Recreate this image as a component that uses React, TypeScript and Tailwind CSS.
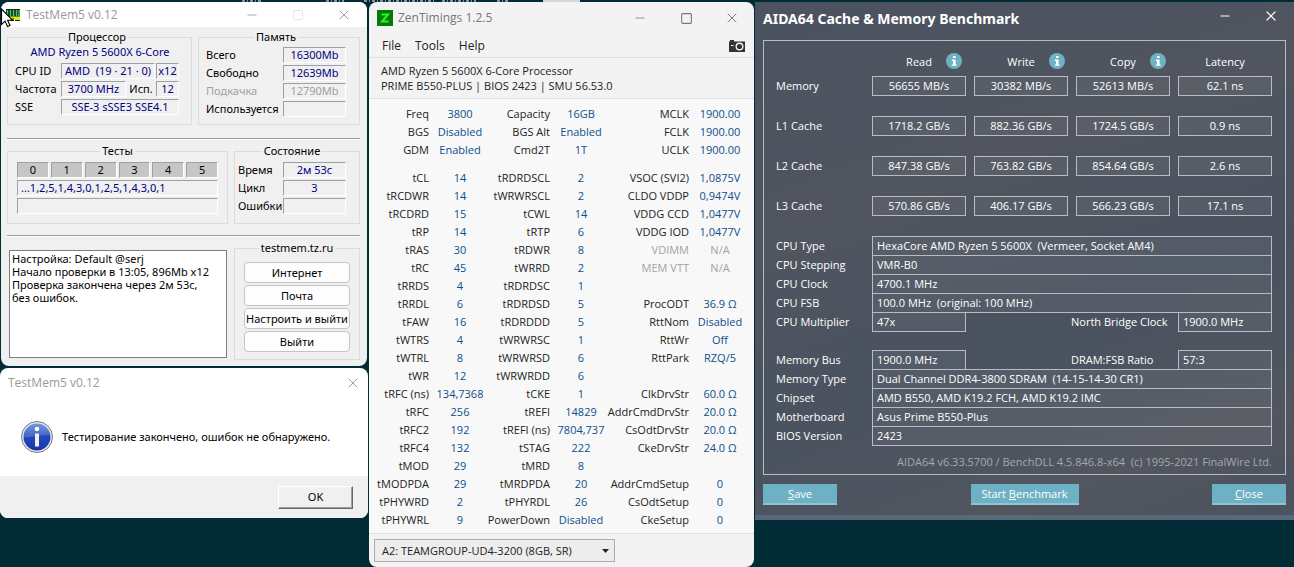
import React from 'react';
import { Minus, Square, X } from 'lucide-react';

const TAHOMA = "font-['Noto_Sans','Liberation_Sans',sans-serif]";
const SEGOE = "font-['Open_Sans','Noto_Sans',sans-serif]";

const TEST_IDS = [0, 1, 2, 3, 4, 5];

const LINKS = ['Интернет', 'Почта', 'Настроить и выйти', 'Выйти'];

type TimingRow = [string, string, string, string, string, string];

const CLOCKS: TimingRow[] = [
  ['Freq', '3800', 'Capacity', '16GB', 'MCLK', '1900.00'],
  ['BGS', 'Disabled', 'BGS Alt', 'Enabled', 'FCLK', '1900.00'],
  ['GDM', 'Enabled', 'Cmd2T', '1T', 'UCLK', '1900.00'],
];

const TIMINGS: TimingRow[] = [
  ['tCL', '14', 'tRDRDSCL', '2', 'VSOC (SVI2)', '1,0875V'],
  ['tRCDWR', '14', 'tWRWRSCL', '2', 'CLDO VDDP', '0,9474V'],
  ['tRCDRD', '15', 'tCWL', '14', 'VDDG CCD', '1,0477V'],
  ['tRP', '14', 'tRTP', '6', 'VDDG IOD', '1,0477V'],
  ['tRAS', '30', 'tRDWR', '8', 'VDIMM', 'N/A'],
  ['tRC', '45', 'tWRRD', '2', 'MEM VTT', 'N/A'],
  ['tRRDS', '4', 'tRDRDSC', '1', '', ''],
  ['tRRDL', '6', 'tRDRDSD', '5', 'ProcODT', '36.9 Ω'],
  ['tFAW', '16', 'tRDRDDD', '5', 'RttNom', 'Disabled'],
  ['tWTRS', '4', 'tWRWRSC', '1', 'RttWr', 'Off'],
  ['tWTRL', '8', 'tWRWRSD', '6', 'RttPark', 'RZQ/5'],
  ['tWR', '12', 'tWRWRDD', '6', '', ''],
  ['tRFC (ns)', '134,7368', 'tCKE', '1', 'ClkDrvStr', '60.0 Ω'],
  ['tRFC', '256', 'tREFI', '14829', 'AddrCmdDrvStr', '20.0 Ω'],
  ['tRFC2', '192', 'tREFI (ns)', '7804,737', 'CsOdtDrvStr', '20.0 Ω'],
  ['tRFC4', '132', 'tSTAG', '222', 'CkeDrvStr', '24.0 Ω'],
  ['tMOD', '29', 'tMRD', '8', '', ''],
  ['tMODPDA', '29', 'tMRDPDA', '20', 'AddrCmdSetup', '0'],
  ['tPHYWRD', '2', 'tPHYRDL', '26', 'CsOdtSetup', '0'],
  ['tPHYWRL', '9', 'PowerDown', 'Disabled', 'CkeSetup', '0'],
];

const BENCH = [
  { name: 'Memory', values: ['56655 MB/s', '30382 MB/s', '52613 MB/s', '62.1 ns'] },
  { name: 'L1 Cache', values: ['1718.2 GB/s', '882.36 GB/s', '1724.5 GB/s', '0.9 ns'] },
  { name: 'L2 Cache', values: ['847.38 GB/s', '763.82 GB/s', '854.64 GB/s', '2.6 ns'] },
  { name: 'L3 Cache', values: ['570.86 GB/s', '406.17 GB/s', '566.23 GB/s', '17.1 ns'] },
];

type Spec = { label: string; value: string; side?: { label: string; value: string } };

const CPU_SPECS: Spec[] = [
  { label: 'CPU Type', value: 'HexaCore AMD Ryzen 5 5600X  (Vermeer, Socket AM4)' },
  { label: 'CPU Stepping', value: 'VMR-B0' },
  { label: 'CPU Clock', value: '4700.1 MHz' },
  { label: 'CPU FSB', value: '100.0 MHz  (original: 100 MHz)' },
  { label: 'CPU Multiplier', value: '47x', side: { label: 'North Bridge Clock', value: '1900.0 MHz' } },
];

const BOARD_SPECS: Spec[] = [
  { label: 'Memory Bus', value: '1900.0 MHz', side: { label: 'DRAM:FSB Ratio', value: '57:3' } },
  { label: 'Memory Type', value: 'Dual Channel DDR4-3800 SDRAM  (14-15-14-30 CR1)' },
  { label: 'Chipset', value: 'AMD B550, AMD K19.2 FCH, AMD K19.2 IMC' },
  { label: 'Motherboard', value: 'Asus Prime B550-Plus' },
  { label: 'BIOS Version', value: '2423' },
];

/* ---------- TestMem5 ---------- */

function Sunken({ children, className = '' }: { children?: React.ReactNode; className?: string }) {
  return (
    <span
      className={`flex h-4 items-center justify-center whitespace-pre border border-t-[#a0a0a0] border-l-[#a0a0a0] border-r-white border-b-white text-[#000080] ${className}`}
    >
      {children}
    </span>
  );
}

function Group({ title, children, className = '' }: { title: string; children: React.ReactNode; className?: string }) {
  return (
    <fieldset className={`min-w-0 border border-[#dcdcdc] ${className}`}>
      <legend className="mx-auto px-0.5 leading-[14px]">{title}</legend>
      {children}
    </fieldset>
  );
}

function StatRow({ label, value, disabled = false }: { label: string; value?: string; disabled?: boolean }) {
  return (
    <div className="flex items-center justify-between">
      <span className={`whitespace-nowrap ${disabled ? 'text-[#a0a0a0]' : ''}`}>{label}</span>
      <Sunken className="w-[63px] shrink-0">
        <span className={disabled ? 'text-[#a0a0a0]' : ''}>{value}</span>
      </Sunken>
    </div>
  );
}

function RamIcon() {
  return (
    <svg width="18" height="14" viewBox="0 0 18 14" aria-hidden="true">
      <rect x="1" y="1" width="14" height="9" fill="#0b3d1c" />
      <path d="M2.5 2v6M5.5 2v6M8.5 2v6M11.5 2v6M14 2v6" stroke="#4fc47a" strokeWidth="1.3" />
      <rect x="4" y="8.5" width="11" height="3.5" fill="#e3e31a" />
      <path d="M1 1.5h14M8 12v-2M5 12.5h4M10 12.5h5" stroke="#222" />
    </svg>
  );
}

function Cursor() {
  return (
    <svg className="absolute top-2 left-0" width="14" height="20" viewBox="0 0 14 20" aria-hidden="true">
      <path d="M1.5 1v15.5l3.6-3.4 2.4 5.4 2.5-1.1-2.4-5.2h4.9z" fill="#fff" stroke="#000" strokeWidth="1.1" />
    </svg>
  );
}

function TestMemWindow() {
  return (
    <section className={`mx-px overflow-hidden rounded-lg bg-[#f0f0f0] text-[11px] leading-[14px] text-black ${TAHOMA}`}>
      <header className="flex h-[25px] items-center bg-white pl-1 text-[#999]">
        <RamIcon />
        <h1 className={`ml-[3px] flex-1 text-xs ${SEGOE}`}>TestMem5 v0.12</h1>
        <button type="button" aria-label="Свернуть" className="flex w-[46px] justify-center">
          <Minus size={14} strokeWidth={1.4} />
        </button>
        <button type="button" aria-label="Развернуть" disabled className="flex w-[46px] justify-center text-[#e2e2e2]">
          <Square size={12} strokeWidth={1.8} />
        </button>
        <button type="button" aria-label="Закрыть" className="flex w-[46px] justify-center">
          <X size={16} strokeWidth={1.4} />
        </button>
      </header>

      <div className="pt-[3px] pr-[7px] pb-1.5 pl-1.5">
        <div className="grid grid-cols-[185fr_162fr] gap-1.5">
          <Group title="Процессор" className="h-[95px] pr-3 pl-[7px]">
            <div className="flex flex-col gap-0.5 pt-px">
              <p className="h-4 pl-1.5 text-center whitespace-nowrap text-[#000080]">AMD Ryzen 5 5600X 6-Core</p>
              <div className="flex items-center gap-px">
                <span className="w-[45px]">CPU ID</span>
                <Sunken className="flex-1">AMD  (19 · 21 · 0)</Sunken>
                <Sunken className="w-[23px]">x12</Sunken>
              </div>
              <div className="flex items-center gap-px">
                <span className="w-[45px]">Частота</span>
                <Sunken className="w-[65px]">3700 MHz</Sunken>
                <span className="flex-1 text-center">Исп.</span>
                <Sunken className="w-[23px]">12</Sunken>
              </div>
              <div className="flex items-center gap-px">
                <span className="w-[45px]">SSE</span>
                <Sunken className="flex-1">SSE-3 sSSE3 SSE4.1</Sunken>
              </div>
            </div>
          </Group>
          <Group title="Память" className="pr-[13px] pl-[7px]">
            <div className="flex flex-col gap-0.5 pt-[3px]">
              <StatRow label="Всего" value="16300Mb" />
              <StatRow label="Свободно" value="12639Mb" />
              <StatRow label="Подкачка" value="12790Mb" disabled />
              <StatRow label="Используется" />
            </div>
          </Group>
        </div>

        <hr className="mt-[13px] h-0.5 border-t border-b border-t-[#a0a0a0] border-b-white" />

        <div className="mt-1 grid grid-cols-[221fr_126fr] gap-1.5">
          <Group title="Тесты" className="h-20 px-[9px]">
            <div className="flex flex-col gap-0.5 pt-1">
              <ol className="grid h-4 grid-cols-6 gap-0.5">
                {TEST_IDS.map((id) => (
                  <li key={id} className="flex items-center justify-center border border-t-[#a0a0a0] border-l-[#a0a0a0] border-r-white border-b-white bg-[#c6c6c6]">
                    {id}
                  </li>
                ))}
              </ol>
              <Sunken className="justify-start pl-[3px]">...1,2,5,1,4,3,0,1,2,5,1,4,3,0,1</Sunken>
              <Sunken />
            </div>
          </Group>
          <Group title="Состояние" className="pr-[13px] pl-[3px]">
            <div className="flex flex-col gap-0.5 pt-1">
              <StatRow label="Время" value="2м 53с" />
              <StatRow label="Цикл" value="3" />
              <StatRow label="Ошибки" />
            </div>
          </Group>
        </div>

        <hr className="mt-[11px] h-0.5 border-t border-b border-t-[#a0a0a0] border-b-white" />

        <div className="mt-1 grid grid-cols-[221fr_126fr] gap-1.5">
          <textarea
            readOnly
            aria-label="Журнал"
            className="ml-0.5 mt-[9px] mb-0.5 mr-px resize-none overflow-hidden border border-[#7a8085] bg-white px-0.5 pt-px leading-[13px] outline-none"
            defaultValue={'Настройка: Default @serj\nНачало проверки в 13:05, 896Mb x12\nПроверка закончена через 2м 53с,\nбез ошибок.'}
          />
          <Group title="testmem.tz.ru" className="h-[119px] px-[9px]">
            <div className="flex flex-col gap-0.5 pt-[7px]">
              {LINKS.map((link) => (
                <button key={link} type="button" className="h-[21px] rounded-[4px] border border-[#c4c4c4] bg-[#fdfdfd] whitespace-nowrap">
                  {link}
                </button>
              ))}
            </div>
          </Group>
        </div>
      </div>
    </section>
  );
}

function InfoBadge() {
  return (
    <svg width="34" height="34" viewBox="0 0 34 34" aria-hidden="true">
      <defs>
        <linearGradient id="badge" x1="0" y1="0" x2="0" y2="1">
          <stop offset="0" stopColor="#5b86dd" />
          <stop offset="0.5" stopColor="#2349bd" />
          <stop offset="1" stopColor="#1a33a8" />
        </linearGradient>
      </defs>
      <circle cx="17" cy="17" r="15.5" fill="#e8e8ec" stroke="#77797f" />
      <circle cx="17" cy="17" r="13.5" fill="url(#badge)" />
      <path d="M4 17a13 13 0 0 1 26-2c-6-1-18 3-26 2z" fill="#fff" opacity="0.14" />
      <circle cx="17" cy="9" r="2.3" fill="#fff" />
      <rect x="15" y="13.5" width="4" height="13" rx="0.6" fill="#f1f2f8" />
    </svg>
  );
}

function ResultDialog() {
  return (
    <section role="dialog" aria-label="TestMem5 v0.12" className={`mt-0.5 overflow-hidden rounded-lg bg-white text-[11px] text-black ${TAHOMA}`}>
      <header className="flex h-[30px] items-center pl-2 text-[#999]">
        <h2 className={`flex-1 text-xs ${SEGOE}`}>TestMem5 v0.12</h2>
        <button type="button" aria-label="Закрыть" className="mr-[7px] text-[#888]">
          <X size={16} strokeWidth={1.2} />
        </button>
      </header>
      <div className="flex h-[78px] items-center gap-2 pl-5">
        <InfoBadge />
        <p className="whitespace-nowrap">Тестирование закончено, ошибок не обнаружено.</p>
      </div>
      <footer className="flex h-[42px] items-center justify-end bg-[#f0f0f0] pr-[15px]">
        <button type="button" className="h-[23px] w-[75px] border border-t-white border-l-white border-r-[#696969] border-b-[#696969] shadow-[inset_-1px_-1px_0_#a0a0a0]">
          OK
        </button>
      </footer>
    </section>
  );
}

/* ---------- ZenTimings ---------- */

function TimingRows({ rows }: { rows: TimingRow[] }) {
  return (
    <>
      {rows.map((row) => (
        <tr key={row[0]} className="h-[18px]">
          {row.map((cell, i) => {
            const missing = i > 3 && row[5] === 'N/A';
            if (i % 2 === 0) {
              return (
                <th key={i} scope="row" className={`font-normal whitespace-nowrap ${missing ? 'text-[#a3a3a3]' : ''}`}>
                  <span className="flex justify-end">{cell}</span>
                </th>
              );
            }
            return (
              <td key={i} className={`text-center whitespace-nowrap ${missing ? 'text-[#a3a3a3]' : 'text-[#0d4f8b]'}`}>
                {cell}
              </td>
            );
          })}
        </tr>
      ))}
    </>
  );
}

function CameraIcon() {
  return (
    <svg width="16" height="12" viewBox="0 0 16 12" aria-hidden="true">
      <path d="M0 1.5h1V0h4v1.5h11V12H0z" fill="#333" />
      <circle cx="10.5" cy="6.5" r="3.3" fill="none" stroke="#f3f3f3" strokeWidth="1.4" />
      <path d="M2 5.5h2.5" stroke="#f3f3f3" strokeWidth="1.2" />
    </svg>
  );
}

function ZenTimingsWindow() {
  return (
    <section className={`mx-px flex flex-col self-stretch overflow-hidden rounded-lg bg-[#f3f3f3] text-[11px] leading-[15px] text-[#222] ${SEGOE}`}>
      <header className="flex h-8 items-center pl-2 text-[#777]">
        <svg width="16" height="16" viewBox="0 0 16 16" aria-hidden="true">
          <rect width="16" height="16" fill="#067a06" />
          <path d="M4.5 4.5h6.5L5 11.5h6.5" fill="none" stroke="#2cf22c" strokeWidth="2" />
        </svg>
        <h1 className="ml-[5px] flex-1 text-xs">ZenTimings 1.2.5</h1>
        <button type="button" aria-label="Minimize" className="flex w-[46px] justify-center">
          <Minus size={14} strokeWidth={1.4} />
        </button>
        <button type="button" aria-label="Maximize" className="flex w-[46px] justify-center">
          <Square size={13} strokeWidth={2} />
        </button>
        <button type="button" aria-label="Close" className="flex w-[45px] justify-center">
          <X size={16} strokeWidth={1.4} />
        </button>
      </header>

      <nav className="flex h-6 items-center gap-3.5 border-b border-[#dde1e4] pr-[9px] pl-[13px] text-xs">
        <button type="button">File</button>
        <button type="button">Tools</button>
        <button type="button">Help</button>
        <button type="button" aria-label="Screenshot" className="ml-auto">
          <CameraIcon />
        </button>
      </nav>

      <div className="h-[41px] border-b border-[#dde1e4] px-3 pt-[5px]">
        <p className="whitespace-nowrap">AMD Ryzen 5 5600X 6-Core Processor</p>
        <p className="whitespace-nowrap">PRIME B550-PLUS | BIOS 2423 | SMU 56.53.0</p>
      </div>

      <div className="h-[435px] border-b border-[#dde1e4] bg-[#f8f8f8] pt-[5px] pr-[3px]">
        <table className="w-full table-fixed border-collapse">
          <colgroup>
            <col className="w-[60px]" />
            <col className="w-[62px]" />
            <col className="w-[59px]" />
            <col className="w-[62px]" />
            <col />
            <col className="w-[62px]" />
          </colgroup>
          <tbody>
            <TimingRows rows={CLOCKS} />
          </tbody>
          <tbody className="before:block before:h-2.5">
            <TimingRows rows={TIMINGS} />
          </tbody>
        </table>
      </div>

      <div className="flex flex-1 items-center px-[5px]">
        <div className="relative">
          <select aria-label="Memory module" className="block h-[23px] w-[241px] appearance-none border border-[#acacac] bg-[#ededed] pl-[7px] outline-none">
            <option>A2: TEAMGROUP-UD4-3200 (8GB, SR)</option>
          </select>
          <svg className="pointer-events-none absolute top-2.5 right-1.5" width="7" height="4" viewBox="0 0 7 4" aria-hidden="true">
            <path d="M0 0h7L3.5 4z" fill="#222" />
          </svg>
        </div>
      </div>
    </section>
  );
}

/* ---------- AIDA64 ---------- */

function InfoDot() {
  return (
    <svg width="16" height="16" viewBox="0 0 16 16" aria-hidden="true">
      <circle cx="8" cy="8" r="8" fill="#6fb1c4" />
      <rect x="7" y="3" width="2.6" height="2" fill="#fff" />
      <path d="M5.8 6.6h3.8v4.8h1v1.4H5.8v-1.4H7V8H5.8z" fill="#fff" />
    </svg>
  );
}

function SpecTable({ specs }: { specs: Spec[] }) {
  return (
    <dl>
      {specs.map((spec) => (
        <div key={spec.label} className="-mt-px grid grid-cols-[96px_94fr_212fr_94fr] first:mt-0">
          <dt className="leading-5">{spec.label}</dt>
          <dd className={`h-5 border border-[#b9bcc2] bg-white/5 px-1 leading-[18px] whitespace-pre ${spec.side ? '' : 'col-span-3'}`}>{spec.value}</dd>
          {spec.side && (
            <>
              <dt className="pl-[105px] leading-5 whitespace-nowrap">{spec.side.label}</dt>
              <dd className="h-5 border border-[#b9bcc2] bg-white/5 px-1 leading-[18px] whitespace-pre">{spec.side.value}</dd>
            </>
          )}
        </div>
      ))}
    </dl>
  );
}

function AidaButton({ hotkey, before = '', after, className }: { hotkey: string; before?: string; after: string; className: string }) {
  return (
    <button type="button" className={`h-[21px] border-b-2 border-[#8cc6d3] bg-[#6fb1c4] leading-[19px] whitespace-pre text-white ${className}`}>
      {before}
      <span className="underline">{hotkey}</span>
      {after}
    </button>
  );
}

function AidaWindow() {
  return (
    <section className={`border-b-[5px] border-[#56687a] bg-[#4d535f] bg-[linear-gradient(160deg,#4b5260_0%,#50555f_35%,#4a5260_60%,#51565f_85%,#4c525f_100%)] px-2 text-[11px] leading-[15px] text-white ${SEGOE}`}>
      <header className="-mr-2 flex h-[38px] items-start pt-1.5">
        <h1 className="flex-1 pt-0.5 font-['Noto_Sans',sans-serif] text-sm leading-[18px] font-bold">AIDA64 Cache &amp; Memory Benchmark</h1>
        <button type="button" aria-label="Minimize" className="flex h-4 w-[46px] items-center justify-center">
          <Minus size={14} strokeWidth={2} />
        </button>
        <button type="button" aria-label="Close window" className="flex h-4 w-[46px] items-center justify-center">
          <X size={16} strokeWidth={1.8} />
        </button>
      </header>

      <div className="h-[435px] border border-[#b9bcc2] pt-2 pr-[13px] pl-3">
        <table className="w-full table-fixed border-separate border-spacing-0">
          <colgroup>
            <col className="w-[88px]" />
            <col />
            <col />
            <col />
            <col />
          </colgroup>
          <thead>
            <tr className="h-6">
              <td />
              {['Read', 'Write', 'Copy'].map((head) => (
                <th key={head} scope="col" className="pl-2 font-normal">
                  <span className="relative">
                    {head}
                    <button type="button" aria-label={`${head} info`} className="absolute -top-px left-full ml-3.5">
                      <InfoDot />
                    </button>
                  </span>
                </th>
              ))}
              <th scope="col" className="pl-2 font-normal">Latency</th>
            </tr>
          </thead>
          <tbody>
            {BENCH.map((row) => (
              <tr key={row.name} className="h-10">
                <th scope="row" className="pt-[5px] text-left align-top font-normal whitespace-nowrap">{row.name}</th>
                {row.values.map((value) => (
                  <td key={value} className="pt-[3px] pl-2 text-center align-top">
                    <span className="block h-5 border border-[#b9bcc2] bg-white/5 leading-[18px]">{value}</span>
                  </td>
                ))}
              </tr>
            ))}
          </tbody>
        </table>

        <div className="flex flex-col gap-[18px] pt-[3px]">
          <SpecTable specs={CPU_SPECS} />
          <SpecTable specs={BOARD_SPECS} />
        </div>
        <p className="mt-2 text-right whitespace-pre text-[#a5a8ad]">AIDA64 v6.33.5700 / BenchDLL 4.5.846.8-x64  (c) 1995-2021 FinalWire Ltd.</p>
      </div>

      <footer className="flex justify-between pt-[9px] pb-2.5">
        <AidaButton hotkey="S" after="ave" className="w-[74px]" />
        <AidaButton before="Start " hotkey="B" after="enchmark" className="w-[108px]" />
        <AidaButton hotkey="C" after="lose" className="w-[74px]" />
      </footer>
    </section>
  );
}

/* sliver of the terminal that stays visible above the windows */
function TerminalEdge() {
  return (
    <svg className="absolute top-0 left-0" width="600" height="3" viewBox="0 0 600 3" aria-hidden="true">
      <path d="M242 1h20M326 1h18M364 1h70M442 1h34M497 1h12" stroke="#a9b8ba" strokeWidth="1.5" strokeDasharray="3 2 1 2" />
      <rect x="543" width="37" height="2" fill="#d5d8d8" />
    </svg>
  );
}

export default function App() {
  return (
    <div className="relative min-h-screen overflow-hidden bg-[#012c35] pt-0.5">
      <TerminalEdge />
      <main className="grid min-h-[calc(100vh-2px)] grid-cols-[368fr_387fr_539fr] items-start">
        <div>
          <TestMemWindow />
          <ResultDialog />
        </div>
        <ZenTimingsWindow />
        <AidaWindow />
      </main>
      <Cursor />
    </div>
  );
}
